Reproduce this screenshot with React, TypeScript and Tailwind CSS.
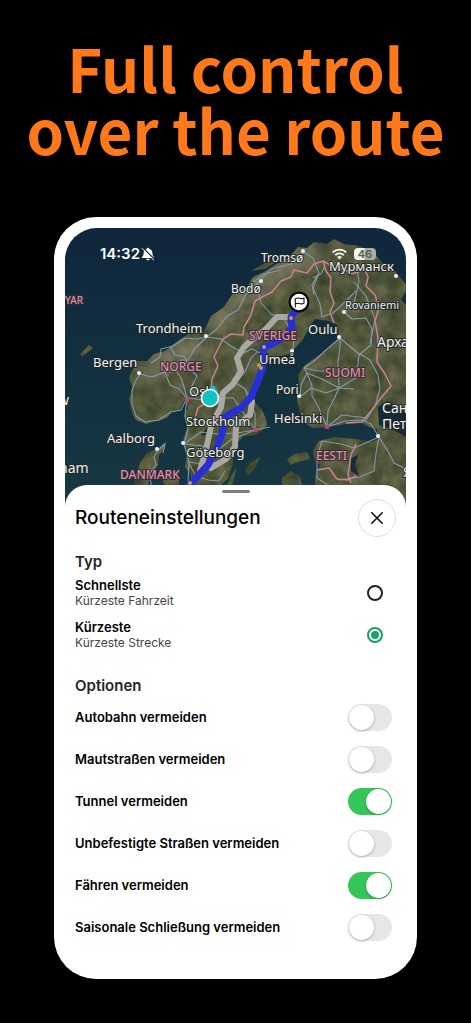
import { useState } from "react";

type Place = {
  name: string;
  x: number;
  y: number;
  size: number;
  dot?: [number, number];
};

const places: Place[] = [
  { name: "Tromsø", x: 260, y: 261, size: 12, dot: [302, 250] },
  { name: "Bodø", x: 230, y: 292, size: 12, dot: [260, 280] },
  { name: "Мурманск", x: 328, y: 270, size: 13, dot: [395, 275] },
  { name: "Rovaniemi", x: 344, y: 308, size: 11, dot: [343, 311] },
  { name: "Trondheim", x: 135, y: 332, size: 13, dot: [205, 335] },
  { name: "Oulu", x: 307, y: 333, size: 13, dot: [338, 336] },
  { name: "Арха", x: 376, y: 346, size: 14 },
  { name: "Bergen", x: 92, y: 366, size: 13, dot: [138, 372] },
  { name: "Umeå", x: 258, y: 363, size: 13, dot: [291, 350] },
  { name: "Pori", x: 275, y: 393, size: 12, dot: [298, 395] },
  { name: "Oslo", x: 188, y: 395, size: 13 },
  { name: "Stockholm", x: 185, y: 425, size: 13 },
  { name: "Helsinki", x: 273, y: 422, size: 13 },
  { name: "Сан", x: 381, y: 412, size: 14 },
  { name: "Пет", x: 381, y: 428, size: 14, dot: [377, 435] },
  { name: "Aalborg", x: 106, y: 442, size: 13, dot: [156, 448] },
  { name: "Göteborg", x: 185, y: 456, size: 13, dot: [182, 442] },
  { name: "ham", x: 58, y: 472, size: 14 },
  { name: "w", x: 57, y: 404, size: 14 },
  { name: "Я", x: 402, y: 476, size: 14 },
];

const countries = [
  { name: "YAR", x: 64, y: 303, size: 10 },
  { name: "NORGE", x: 159, y: 370, size: 12 },
  { name: "SVERIGE", x: 248, y: 339, size: 12 },
  { name: "SUOMI", x: 324, y: 376, size: 12 },
  { name: "EESTI", x: 315, y: 459, size: 12 },
  { name: "DANMARK", x: 119, y: 478, size: 12 },
];

const land = [
  "M130 372L128 377 131 386 128 398 131 412 135 419 145 423 156 420 166 417 171 411 178 410 182 402 185 397 187 407 183 415 186 427 182 440 186 452 184 466 190 475 188 492H216L221 483 227 477 232 463 232 448 242 435 255 434 266 425 265 418 261 409 254 402 253 388 259 376 260 366 267 359 276 356 288 353 301 340 309 325 314 318 328 320 336 324 338 337 324 350 304 364 297 374 299 389 296 398 299 412 304 422 311 427 326 426 345 423 361 422 368 426 376 428 378 438 370 441 355 438 334 436 318 440 312 449 314 460 319 464 314 475 315 510H410V308L400 299 407 286 394 270 383 264 375 254 359 245 343 243 333 238 326 243 313 241 306 247 297 246 286 258 275 263 263 271 252 276 246 287 232 292 223 306 210 315 203 330 187 333 174 342 164 350 153 353 146 360 137 360Z",
  "M133 492L134 476 139 462 146 452 158 447 165 440 164 447 158 454 157 465 149 473 146 492Z",
  "M161 475L171 470 178 477 178 492H165Z",
  "M244 470L249 462 259 456 255 466 248 474Z",
  "M286 458L294 453 306 451 309 458 297 461 289 464Z",
  "M281 477L290 470 299 475 303 492H281Z",
  "M223 492L230 475 236 466 232 482Z",
  "M79 353L88 344 92 347 81 356Z",
  "M250 270L264 262 279 259 264 268Z",
];

const roads = [
  "M139 373L134 381 131 390 131 403 135 415 144 421 158 419 170 411 180 409 186 397",
  "M139 373L151 376 164 371 169 384 178 388 186 397",
  "M206 336L196 338 184 337 172 345 160 348 159 356 150 362",
  "M206 336L194 347 187 359 179 359 176 371 181 379 186 397",
  "M169 345L174 354 184 356 188 367 196 375 190 387 196 396",
  "M206 336L220 338 230 345 242 352 251 348 267 356",
  "M206 336L216 328 226 315 237 309 245 293 253 286 258 281 270 268 290 263 303 251",
  "M245 293L250 283 263 273 280 269",
  "M256 285L260 302 270 313 283 318 293 335 292 351",
  "M186 397L184 414 187 428 183 443 188 461 187 480",
  "M186 397L202 399 216 397 232 397 240 408 254 429",
  "M216 398L227 385 235 382 244 388 251 398",
  "M235 382L244 371 250 357 256 351",
  "M183 443L200 431 216 433 236 432 254 429 269 426",
  "M183 443L202 445 212 453 231 438 242 434 254 429",
  "M188 461L202 463 220 461 230 449",
  "M187 461L195 475 207 479 218 480 224 470",
  "M244 388L248 400 254 412 254 429",
  "M303 251L312 257 318 272 312 287 319 303 321 316",
  "M318 272L311 284 313 294",
  "M312 277L320 273 324 265",
  "M321 316L332 312 343 302 355 290",
  "M339 337L339 347 337 360 338 387 333 398 327 410 326 426",
  "M339 337L326 348 313 360 303 367 306 372 311 385 311 395 317 405 326 426",
  "M339 337L346 343 357 352 369 359 377 374 379 388 374 405 364 421",
  "M343 311L351 318 365 317 371 328 370 344 358 354 355 377 338 387",
  "M303 367L318 370 327 370",
  "M306 372L321 378 338 387 353 388",
  "M299 396L310 387 325 392 338 387",
  "M299 396L300 384 306 372",
  "M326 426L344 420 361 419 370 423 378 436",
  "M326 426L341 414 366 417",
  "M355 261L358 280 355 294 352 304 343 311",
  "M353 281L365 295 374 318 369 343",
  "M321 440L316 456 316 477 330 486",
  "M321 440L340 443 353 447 360 444 378 436",
  "M378 436L375 452 373 470 359 476 337 479",
  "M378 436L388 452 393 462 410 470",
  "M157 449L153 456 155 464 148 474 151 486",
  "M157 449L164 443 162 452",
];

const borders = [
  "M192 424L197 407 209 399 211 378 217 365 213 356 222 338 230 333 242 334 243 326 250 314 254 300 263 295 271 291 280 280 290 276 293 269 306 272 313 263 322 260 331 265 342 268 350 272",
  "M322 260L325 270 330 277 329 291 333 302 329 311 333 322",
  "M350 273L364 269 367 276 365 285 374 294 378 307 374 320 377 337 376 361 384 373 390 385 380 397 370 410 361 421 345 422",
  "M355 443L350 454 347 474 350 482",
  "M316 469L328 467 336 478 347 479 355 475",
];

const mapRoute =
  "M299 303L290 316 291 327 284 336 273 342 262 347 263 357 261 369 257 380 250 396 240 407 224 416 221 433 216 446 207 464 194 478 184 489";

function MapView() {
  return (
    <svg
      className="block w-full"
      viewBox="64 227 341 279"
      preserveAspectRatio="xMidYMin slice"
      role="img"
      aria-label="Karte"
    >
      <defs>
        <linearGradient id="sea" x1="0" y1="0" x2="0" y2="1">
          <stop offset="0" stopColor="#10263c" />
          <stop offset="0.5" stopColor="#12303f" />
          <stop offset="1" stopColor="#173843" />
        </linearGradient>
        <filter id="terrain" x="0" y="0" width="1" height="1" colorInterpolationFilters="sRGB">
          <feTurbulence type="fractalNoise" baseFrequency="0.07" numOctaves="5" seed="8" />
          <feColorMatrix values="0.28 0 0 0 0.18  0.22 0 0 0 0.23  0.18 0.04 0 0 0.12  0 0 0 0 1" />
          <feComposite in2="SourceGraphic" operator="in" />
        </filter>
        <filter id="soft" x="-0.5" y="-0.5" width="2" height="2">
          <feGaussianBlur stdDeviation="7" />
        </filter>
        <clipPath id="coast">
          <path d={land[0]} />
        </clipPath>
      </defs>
      <rect x="60" y="220" width="350" height="290" fill="url(#sea)" />
      <g filter="url(#terrain)">
        {land.map((d) => (
          <path key={d} d={d} fill="#485039" />
        ))}
      </g>
      <g clipPath="url(#coast)">
        <path
          d="M145 375L172 352 200 346M208 327L250 290 315 248"
          fill="none"
          stroke="#9c9280"
          strokeWidth="20"
          opacity="0.45"
          filter="url(#soft)"
        />
        <path d="M377 406L386 400 402 408 410 404V438L390 428 378 424Z" fill="#162a35" />
        <path d="M350 457L357 454 354 464 358 475 350 470Z" fill="#182a3a" />
        <path d="M200 435L206 426 214 424 210 432ZM211 455L216 443 219 443 215 455Z" fill="#17303c" />
      </g>
      <g fill="none" stroke="#8ba1b6" strokeWidth="1.1" strokeLinejoin="round" opacity="0.9">
        {roads.map((d) => (
          <path key={d} d={d} />
        ))}
      </g>
      <g fill="none" stroke="#c58491" strokeWidth="1.5" strokeLinejoin="round">
        {borders.map((d) => (
          <path key={d} d={d} />
        ))}
      </g>
      <g fill="none" stroke="#aaa8a3" strokeWidth="6" strokeLinejoin="round" strokeLinecap="round">
        <path d="M288 316L276 316 263 330 253 337 243 346 236 357 240 370 232 383 222 392 220 406 210 425 205 449 199 469" />
        <path d="M251 401L249 414 235 425 234 446 225 458 210 467" />
      </g>
      <path
        d={mapRoute}
        fill="none"
        stroke="#2730d5"
        strokeWidth="7"
        strokeLinejoin="round"
        strokeLinecap="round"
      />
      <g fill="#c99b45">
        <circle cx="290" cy="317" r="2" />
        <circle cx="283" cy="331" r="2" />
        <circle cx="263" cy="346" r="2" />
        <circle cx="258" cy="364" r="2" />
        <circle cx="260" cy="367" r="2" />
        <circle cx="189" cy="482" r="2" />
      </g>
      <g fill="#c43d7c">
        <rect x="184" y="397" width="4" height="4" />
        <rect x="252" y="427" width="4" height="4" />
        <rect x="324" y="424" width="4" height="4" />
      </g>
      <g
        className="font-['Noto_Sans',sans-serif]"
        fill="#f1f1ee"
        stroke="#20282a"
        strokeWidth="2"
        strokeLinejoin="round"
        paintOrder="stroke"
      >
        {places.map((p) => (
          <g key={p.name}>
            {p.dot && <circle cx={p.dot[0]} cy={p.dot[1]} r="2" stroke="none" />}
            <text x={p.x} y={p.y} fontSize={p.size}>
              {p.name}
            </text>
          </g>
        ))}
      </g>
      <g
        className="font-['Noto_Sans',sans-serif] font-medium"
        fill="#dc91a9"
        stroke="#392a32"
        strokeWidth="2"
        strokeLinejoin="round"
        paintOrder="stroke"
      >
        {countries.map((c) => (
          <text key={c.name} x={c.x} y={c.y} fontSize={c.size}>
            {c.name}
          </text>
        ))}
      </g>
      <path d="M208 388L213 384 217 391Z" fill="#0fc4c2" />
      <circle cx="209" cy="397" r="8.5" fill="#0fc4c2" stroke="#fff" strokeWidth="1.6" />
      <circle cx="298" cy="301" r="9.4" fill="#fff" stroke="#080808" strokeWidth="2.2" />
      <path
        d="M294.3 306V297.7Q296.3 296.5 298.5 297.3T303 297V302.3Q300.5 303.3 298.3 302.5T294.3 303"
        fill="none"
        stroke="#111"
        strokeWidth="1.1"
        strokeLinecap="round"
        strokeLinejoin="round"
      />
    </svg>
  );
}

function StatusBar() {
  return (
    <div className="absolute inset-x-0 top-0 flex items-center justify-between pt-4 pr-[30px] pl-[35px] text-white">
      <div className="flex items-center gap-px">
        <span className="font-['Inter',sans-serif] text-[15px] leading-5 font-semibold">14:32</span>
        <svg className="size-[14px]" viewBox="0 0 14 14" aria-label="Stumm">
          <path
            d="M7 .8a1.2 1.2 0 0 1 1.2 1.1C10.5 2.4 11.3 4 11.4 6c.1 2.2.5 3 1.5 3.9.4.5.2 1.1-.5 1.1H1.6c-.7 0-.9-.6-.5-1.1 1-.9 1.4-1.7 1.5-3.9.1-2 .9-3.6 3.2-4.1A1.2 1.2 0 0 1 7 .8ZM5.2 11.7h3.6c-.2 1-1 1.5-1.8 1.5s-1.6-.5-1.8-1.5Z"
            fill="currentColor"
          />
          <path d="M2.2 1L13.4 12.2" stroke="#152b40" strokeWidth="1.3" />
          <path d="M1.2 1.5L12.7 13" stroke="currentColor" strokeWidth="1" strokeLinecap="round" />
        </svg>
      </div>
      <div className="flex items-center gap-[7px]">
        <svg className="h-3 w-[15px]" viewBox="0 0 15 12" aria-label="WLAN">
          <g fill="none" stroke="currentColor" strokeWidth="1.9">
            <path d="M.8 4.4a9.5 9.5 0 0 1 13.4 0" />
            <path d="M3.3 7.1a6 6 0 0 1 8.4 0" />
          </g>
          <path d="M5.2 9a3.3 3.3 0 0 1 4.6 0L7.5 11.5Z" fill="currentColor" />
        </svg>
        <span className="rounded bg-linear-to-r from-[#f0f0ec] from-45% to-[#a8ada0] to-50% px-1 font-['Inter',sans-serif] text-[11px] leading-3 font-semibold text-[#535b4d]">
          46
        </span>
      </div>
    </div>
  );
}

type RouteKind = "fastest" | "shortest";

const kinds: { id: RouteKind; title: string; note: string }[] = [
  { id: "fastest", title: "Schnellste", note: "Kürzeste Fahrzeit" },
  { id: "shortest", title: "Kürzeste", note: "Kürzeste Strecke" },
];

const options = [
  { id: "motorway", label: "Autobahn vermeiden", on: false },
  { id: "toll", label: "Mautstraßen vermeiden", on: false },
  { id: "tunnel", label: "Tunnel vermeiden", on: true },
  { id: "unpaved", label: "Unbefestigte Straßen vermeiden", on: false },
  { id: "ferry", label: "Fähren vermeiden", on: true },
  { id: "seasonal", label: "Saisonale Schließung vermeiden", on: false },
];

function RouteSettings() {
  const [kind, setKind] = useState<RouteKind>("shortest");

  return (
    <section className="relative -mt-[22px] rounded-t-[22px] rounded-b-[32px] bg-white px-[10px] pb-5 font-['Inter',sans-serif] text-black">
      <div className="mx-auto h-[14px] w-7 pt-[5px]">
        <div className="h-[3px] rounded-full bg-[#817d80]" />
      </div>
      <header className="flex items-center justify-between">
        <h2 className="text-[19px] leading-6 font-medium">Routeneinstellungen</h2>
        <button
          type="button"
          aria-label="Schließen"
          className="grid size-[38px] place-items-center rounded-full border border-[#dedede]"
        >
          <svg className="size-3" viewBox="0 0 12 12" aria-hidden="true">
            <path d="M.8.8l10.4 10.4M11.2.8L.8 11.2" stroke="#111" strokeWidth="1.6" strokeLinecap="round" />
          </svg>
        </button>
      </header>

      <fieldset className="mt-[15px]">
        <legend className="text-[15px] leading-5 font-semibold text-[#252525]">Typ</legend>
        {kinds.map((k) => (
          <label key={k.id} className="flex h-[42px] items-center justify-between pr-[13px]">
            <span className="flex flex-col">
              <span className="text-[13px] leading-4 font-semibold">{k.title}</span>
              <span className="text-[12px] leading-4 text-[#444]">{k.note}</span>
            </span>
            <input
              type="radio"
              name="kind"
              checked={kind === k.id}
              onChange={() => setKind(k.id)}
              className="grid size-4 appearance-none place-items-center rounded-full border-2 border-[#222] before:size-2 before:rounded-full checked:border-[#18a168] checked:before:bg-[#18a168]"
            />
          </label>
        ))}
      </fieldset>

      <fieldset className="mt-5">
        <legend className="text-[15px] leading-5 font-semibold text-[#252525]">Optionen</legend>
        {options.map((o) => (
          <label key={o.id} className="flex h-[42px] items-center justify-between pr-1">
            <span className="text-[13px] leading-4 font-semibold">{o.label}</span>
            <input
              type="checkbox"
              role="switch"
              defaultChecked={o.on}
              className="h-[27px] w-11 appearance-none rounded-full bg-[#e7e7ea] p-px before:block before:size-[25px] before:rounded-full before:bg-white before:shadow-[0_1px_3px_#0004] checked:bg-[#35c659] checked:before:ml-[17px]"
            />
          </label>
        ))}
      </fieldset>
    </section>
  );
}

export default function App() {
  return (
    <main className="min-h-screen bg-black pt-9 pb-11">
      <h1 className="text-center font-['Noto_Sans_CJK_SC',sans-serif] text-[60px] leading-[62px] font-bold text-[#ff7819]">
        Full control
        <br />
        over the route
      </h1>
      <div className="mx-[54px] mt-[57px] rounded-[42px] bg-white p-[11px]">
        <div className="relative overflow-hidden rounded-t-[32px]">
          <MapView />
          <StatusBar />
        </div>
        <RouteSettings />
      </div>
    </main>
  );
}
